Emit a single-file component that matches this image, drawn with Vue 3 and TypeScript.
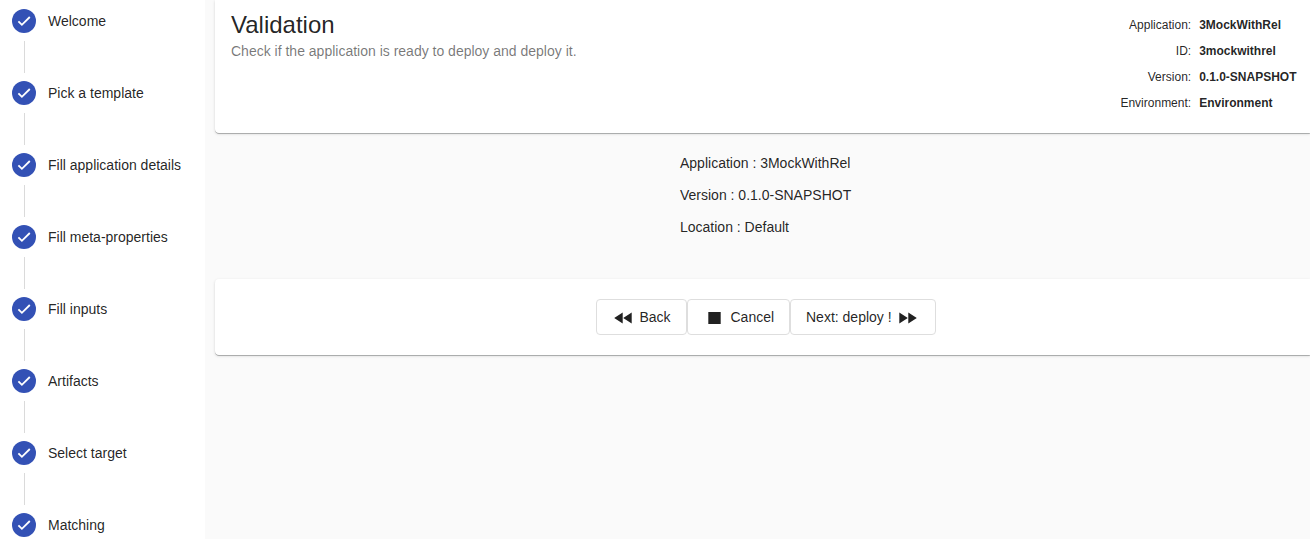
<script setup lang="ts">
const steps: string[] = [
  'Welcome',
  'Pick a template',
  'Fill application details',
  'Fill meta-properties',
  'Fill inputs',
  'Artifacts',
  'Select target',
  'Matching',
]

interface Row {
  label: string
  value: string
}

const details: Row[] = [
  { label: 'Application', value: '3MockWithRel' },
  { label: 'ID', value: '3mockwithrel' },
  { label: 'Version', value: '0.1.0-SNAPSHOT' },
  { label: 'Environment', value: 'Environment' },
]

const summary: Row[] = [
  { label: 'Application', value: '3MockWithRel' },
  { label: 'Version', value: '0.1.0-SNAPSHOT' },
  { label: 'Location', value: 'Default' },
]
</script>

<template>
  <div class="page">
    <nav class="stepper">
      <div v-for="step in steps" :key="step" class="step">
        <div class="marker">
          <svg class="badge" viewBox="0 0 24 24">
            <circle cx="12" cy="12" r="12" />
            <path d="M6.4 12.3 L9.9 15.8 L17.8 8" />
          </svg>
          <span class="connector"></span>
        </div>
        <span class="step-label">{{ step }}</span>
      </div>
    </nav>
    <main class="content">
      <header class="card heading">
        <div class="titles">
          <h1>Validation</h1>
          <p>Check if the application is ready to deploy and deploy it.</p>
        </div>
        <dl class="details">
          <template v-for="row in details" :key="row.label">
            <dt>{{ row.label }}:</dt>
            <dd>{{ row.value }}</dd>
          </template>
        </dl>
      </header>
      <section class="summary">
        <p v-for="row in summary" :key="row.label">{{ row.label }} : {{ row.value }}</p>
      </section>
      <footer class="card actions">
        <button class="back">
          <svg width="18" height="12" viewBox="0 0 18 12"><path d="M8.7 0.5V11.5L0.2 6ZM17.7 0.5V11.5L9.2 6Z" /></svg>
          <span>Back</span>
        </button>
        <button class="cancel">
          <svg width="13" height="12" viewBox="0 0 13 12"><path d="M0.3 0H12.7V12H0.3Z" /></svg>
          <span>Cancel</span>
        </button>
        <button class="next">
          <span>Next: deploy !</span>
          <svg width="18" height="12" viewBox="0 0 18 12"><path d="M0.3 0.5V11.5L8.8 6ZM9.3 0.5V11.5L17.8 6Z" /></svg>
        </button>
      </footer>
    </main>
  </div>
</template>

<style>
html,
body {
  overflow: hidden;
}
</style>

<style scoped>
.page {
  display: flex;
  width: 100vw;
  height: 100vh;
  overflow: hidden;
  background: #fafafa;
  color: rgba(0, 0, 0, 0.87);
  font-family: 'Liberation Sans', Arial, sans-serif;
  font-size: 14px;
}
h1,
p,
dl,
dd {
  margin: 0;
}
.stepper {
  box-sizing: border-box;
  flex: 0 0 205px;
  padding: 9px 0 0 12px;
  background: #fff;
}
.step {
  display: flex;
  gap: 12px;
  height: 72px;
}
.marker {
  display: flex;
  flex-direction: column;
  align-items: center;
  width: 24px;
}
.badge {
  width: 24px;
  height: 24px;
}
.badge circle {
  fill: #3351b5;
}
.badge path {
  fill: none;
  stroke: #fff;
  stroke-width: 1.8;
}
.connector {
  width: 1px;
  height: 32px;
  margin: 8px 0 0 1px;
  background: #dadada;
}
.step-label {
  line-height: 24px;
  white-space: nowrap;
}
.content {
  flex: 1;
  min-width: 0;
  padding-left: 10px;
}
.card {
  box-sizing: border-box;
  display: flex;
  background: #fff;
  box-shadow: 0 1px 0 -0.2px #9a9c9c, 0 1px 3px rgba(0, 0, 0, 0.16);
}
.heading {
  justify-content: space-between;
  height: 133px;
  padding: 9px 13.5px 0 16px;
  border-radius: 0 0 0 4px;
}
h1 {
  font-size: 24px;
  font-weight: 400;
  line-height: 32px;
}
.titles p {
  line-height: 20px;
  color: rgba(0, 0, 0, 0.54);
}
.details {
  display: grid;
  grid-template-columns: auto auto;
  grid-auto-rows: 26px;
  column-gap: 8px;
  padding-top: 3px;
  font-size: 12px;
  line-height: 26px;
}
dt {
  text-align: right;
}
dd {
  font-weight: 700;
}
.summary {
  height: 132px;
  padding: 14px 0 0 465px;
}
.summary p {
  line-height: 32px;
}
.actions {
  justify-content: flex-start;
  height: 76px;
  padding: 20px 0 0 381px;
  border-radius: 4px 0 0 4px;
}
button {
  box-sizing: border-box;
  display: flex;
  align-items: center;
  height: 36px;
  padding: 0;
  border: 1px solid #dedede;
  border-radius: 4px;
  background: #fff;
  color: inherit;
  font: inherit;
  white-space: nowrap;
}
button svg {
  position: relative;
  top: 1px;
  fill: #212121;
}
.back {
  width: 91px;
  padding-left: 17px;
  gap: 7.5px;
}
.cancel {
  width: 103px;
  padding-left: 20px;
  gap: 9.5px;
}
.next {
  width: 146px;
  padding-left: 15px;
  gap: 7px;
}
</style>
